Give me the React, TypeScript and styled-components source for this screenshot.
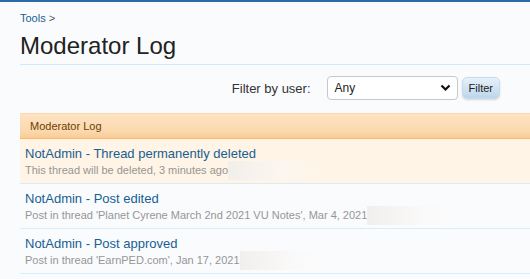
import * as React from 'react';
import styled, { createGlobalStyle } from 'styled-components';

const GlobalStyle = createGlobalStyle`
  html, body {
    margin: 0;
    padding: 0;
    background: #fafbfd;
    overflow: hidden;
  }
  body {
    font-family: 'Liberation Sans', Arial, sans-serif;
  }
`;

const Page = styled.div`
  border-top: 2px solid #2c6aa6;
  min-height: 277px;
  padding-left: 20px;
`;

const Breadcrumb = styled.div`
  padding-top: 9px;
  font-size: 11px;
  line-height: 14px;
  color: #176093;

  span {
    color: #555;
    margin-left: 3px;
  }
`;

const Title = styled.h1`
  margin: 6px 0 0;
  padding-bottom: 4px;
  font-size: 24px;
  line-height: 29px;
  font-weight: normal;
  color: #222;
  border-bottom: 1px solid #d3e9fa;
`;

const FilterBar = styled.form`
  display: flex;
  align-items: center;
  justify-content: flex-end;
  height: 46px;
  padding-right: 30px;
`;

const FilterLabel = styled.label`
  font-size: 13px;
  color: #333;
  margin-right: 16px;
`;

const Select = styled.div`
  display: flex;
  align-items: center;
  justify-content: space-between;
  box-sizing: border-box;
  width: 131px;
  height: 24px;
  padding: 0 6px 0 7px;
  background: #fff;
  border: 1px solid #c8c8c8;
  border-radius: 4px;
  font-size: 12px;
  color: #222;
`;

const FilterButton = styled.button`
  box-sizing: border-box;
  margin-left: 4px;
  height: 22px;
  padding: 0 6px;
  border: 1px solid #c5dcef;
  border-radius: 5px;
  background: linear-gradient(#e7f1f9, #bcd6ec);
  box-shadow: 0 1px 2px rgba(0, 0, 0, 0.15);
  font-family: inherit;
  font-size: 11px;
  color: #222;
`;

const Section = styled.div`
  margin-top: 2px;
`;

const SectionHeader = styled.div`
  height: 24px;
  display: flex;
  align-items: center;
  padding-left: 10px;
  font-size: 11px;
  color: #6d3f03;
  background: linear-gradient(#fde3c3, #fbd9ae 70%, #f9cc95);
  border-top: 1px solid #f9d9b0;
  border-bottom: 1px solid #f9bc6d;
`;

const Row = styled.div<{ $highlight?: boolean }>`
  padding: 6px 5px 5px;
  background: ${(p) => (p.$highlight ? '#fff4e5' : 'transparent')};
  border-bottom: 1px solid #d7edfc;
`;

const RowTitle = styled.a`
  display: block;
  font-size: 13px;
  line-height: 18px;
  color: #176093;
  text-decoration: none;
`;

const RowMeta = styled.div`
  display: flex;
  align-items: center;
  font-size: 11px;
  line-height: 15px;
  color: #969696;
`;

const Redacted = styled.span<{ $w: number }>`
  display: inline-block;
  height: 19px;
  margin: -2px 0;
  width: ${(p) => p.$w}px;
  background: linear-gradient(90deg, rgba(240, 238, 236, 0.9), rgba(250, 248, 246, 0.6) 60%, rgba(255, 255, 255, 0.1));
`;

const Chevron = () => (
  <svg width="11" height="8" viewBox="0 0 11 8">
    <path d="M1.5 1.5 L5.5 5.5 L9.5 1.5" fill="none" stroke="#111" strokeWidth="2.2" />
  </svg>
);

const entries = [
  { title: 'NotAdmin - Thread permanently deleted', meta: 'This thread will be deleted, 3 minutes ago', redact: 94, highlight: true },
  { title: 'NotAdmin - Post edited', meta: "Post in thread 'Planet Cyrene March 2nd 2021 VU Notes', Mar 4, 2021", redact: 92 },
  { title: 'NotAdmin - Post approved', meta: "Post in thread 'EarnPED.com', Jan 17, 2021", redact: 89 },
];

const App: React.FC = () => (
  <>
    <GlobalStyle />
    <Page>
      <Breadcrumb>
        Tools<span>&gt;</span>
      </Breadcrumb>
      <Title>Moderator Log</Title>
      <FilterBar onSubmit={(e) => e.preventDefault()}>
        <FilterLabel>Filter by user:</FilterLabel>
        <Select>
          Any
          <Chevron />
        </Select>
        <FilterButton type="submit">Filter</FilterButton>
      </FilterBar>
      <Section>
        <SectionHeader>Moderator Log</SectionHeader>
        {entries.map((e) => (
          <Row key={e.title} $highlight={e.highlight}>
            <RowTitle href="#">{e.title}</RowTitle>
            <RowMeta>
              {e.meta}
              <Redacted $w={e.redact} />
            </RowMeta>
          </Row>
        ))}
      </Section>
    </Page>
  </>
);

export default App;
